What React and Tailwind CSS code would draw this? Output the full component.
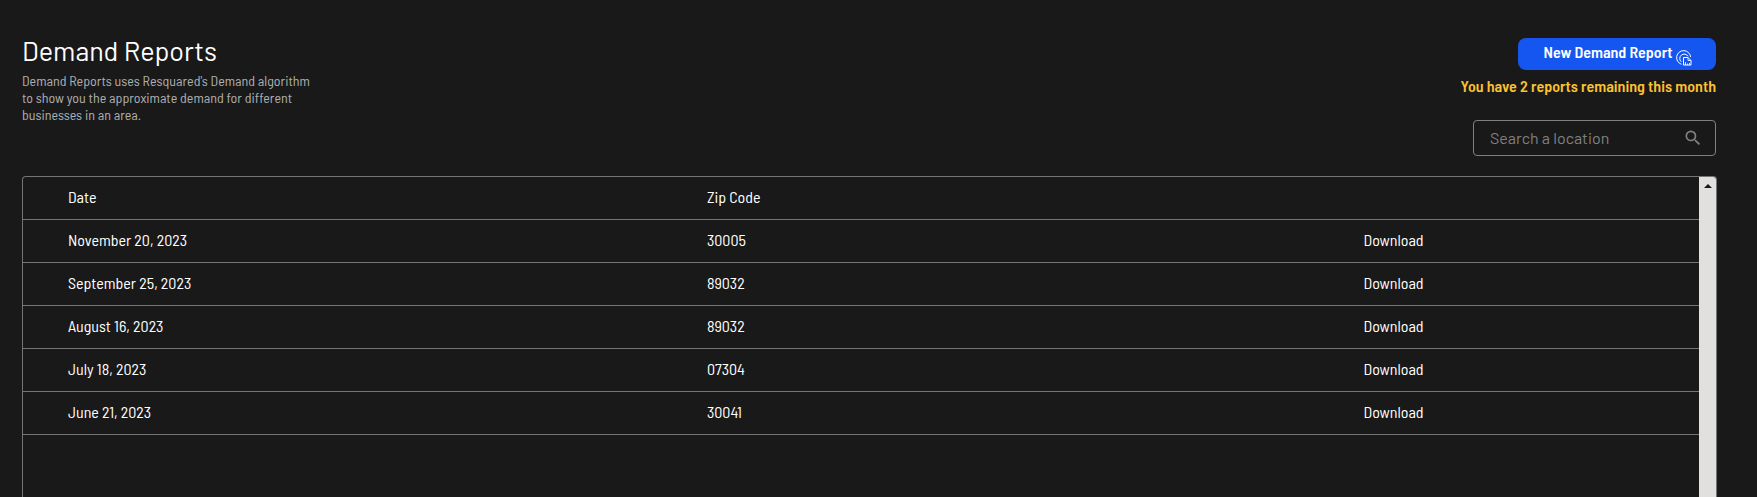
const reports = [
  { id: 1, date: 'November 20, 2023', zip: '30005' },
  { id: 2, date: 'September 25, 2023', zip: '89032' },
  { id: 3, date: 'August 16, 2023', zip: '89032' },
  { id: 4, date: 'July 18, 2023', zip: '07304' },
  { id: 5, date: 'June 21, 2023', zip: '30041' }
]

const ReportIcon = () => (
  <svg viewBox="0 0 16 16" className="w-4 h-4" fill="none" stroke="currentColor" strokeWidth="1" aria-hidden="true">
    <path d="M5.5 14.3A7 7 0 1 1 14.6 7" />
    <path d="M5.3 11.8A4.4 4.4 0 1 1 12 6.3" />
    <path d="M7.5 15V7.5H12l3 3V15z" />
    <path d="M12 7.5v3h3M9.5 15v-3M11.5 15v-1.5M13.5 15v-2" strokeWidth="0.8" />
  </svg>
)

const SearchIcon = () => (
  <svg viewBox="0 0 24 24" className="w-5 h-5 shrink-0" fill="currentColor" aria-hidden="true">
    <path d="M15.5 14h-.79l-.28-.27A6.471 6.471 0 0 0 16 9.5 6.5 6.5 0 1 0 9.5 16c1.61 0 3.09-.59 4.23-1.57l.27.28v.79l5 4.99L20.49 19l-4.99-5zm-6 0C7.01 14 5 11.99 5 9.5S7.01 5 9.5 5 14 7.01 14 9.5 11.99 14 9.5 14z" />
  </svg>
)

const Header = () => (
  <header className="flex justify-between items-start pr-px">
    <div>
      <h1 className="text-[27px] leading-6 font-['Barlow','Roboto',sans-serif]">Demand Reports</h1>
      <p className="mt-2.5 w-[300px] text-sm leading-[17px] text-[#b0b0b0]">
        Demand Reports uses Resquared's Demand algorithm to show you the approximate demand for different businesses in an area.
      </p>
    </div>

    <div className="flex flex-col items-end">
      <button className="flex justify-center items-center gap-1 h-8 w-[198px] pl-0.5 rounded-lg bg-[#1556f0] text-base font-semibold cursor-pointer">
        <span className="pb-1">New Demand Report</span>
        <span className="pt-2">
          <ReportIcon />
        </span>
      </button>
      <p className="mt-2 text-base leading-4 font-semibold text-[#fdc130]">
        You have 2 reports remaining this month
      </p>
      <label className="mt-[26px] flex items-center w-[243px] h-9 pl-4 pr-3 rounded border border-[#808080] text-[#808080]">
        <input
          type="text"
          aria-label="Search a location"
          placeholder="Search a location"
          className="min-w-0 flex-1 bg-transparent outline-none text-base text-white placeholder:text-[#808080] font-['Barlow','Roboto',sans-serif]"
        />
        <SearchIcon />
      </label>
    </div>
  </header>
)

const ReportTable = () => (
  <table className="w-full table-fixed border-separate border-spacing-0 text-left text-base leading-[18px]">
    <thead>
      <tr className="h-[43px]">
        <th className="w-[38%] pl-[45px] pb-0.5 font-normal border-b border-[#757575]">Date</th>
        <th className="w-[39%] pl-[47px] pb-0.5 font-normal border-b border-[#757575]">Zip Code</th>
        <th className="border-b border-[#757575]" aria-label="Actions"></th>
      </tr>
    </thead>
    <tbody>
      {reports.map((report) => (
        <tr key={report.id} className="h-[43px]">
          <td className="pl-[45px] pb-0.5 border-b border-[#757575]">{report.date}</td>
          <td className="pl-[47px] pb-0.5 border-b border-[#757575]">{report.zip}</td>
          <td className="pl-[50px] pb-0.5 border-b border-[#757575]">
            <button className="cursor-pointer">Download</button>
          </td>
        </tr>
      ))}
    </tbody>
  </table>
)

const App = () => {
  return (
    <main
      className="flex flex-col h-screen overflow-hidden bg-[#191919] pt-[38px] pl-[22px] pr-10 text-white font-['Barlow_Semi_Condensed','Barlow','Roboto',sans-serif]"
    >
      <Header />
      <section className="mt-5 flex flex-1 min-h-0 overflow-hidden rounded-t border border-b-0 border-[#757575]">
        <div className="flex-1 min-w-0">
          <ReportTable />
        </div>
        {/* Scroll track */}
        <div className="w-[17px] shrink-0 bg-[#e1e0de] pt-[7px]" aria-hidden="true">
          <svg viewBox="0 0 8 4" className="mx-auto w-2 h-1" fill="#191919">
            <path d="M0 4L4 0l4 4z" />
          </svg>
        </div>
      </section>
    </main>
  )
}

export default App
